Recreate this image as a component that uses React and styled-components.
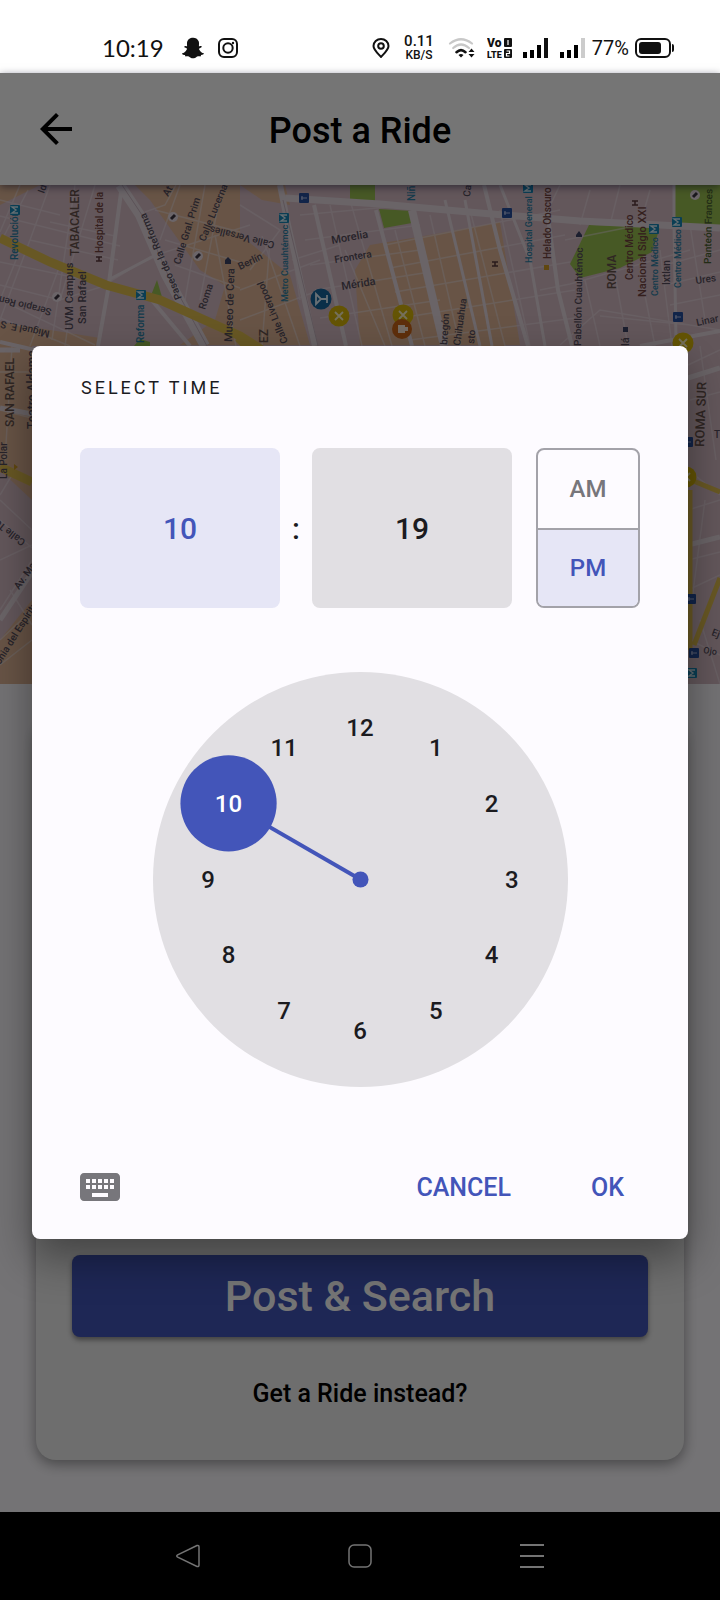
import React, { useState } from "react";
import styled, { createGlobalStyle } from "styled-components";
import { FaSnapchatGhost } from "react-icons/fa";
import { MdArrowBack, MdKeyboard } from "react-icons/md";

const primary = "#4355b9";
const primarySoft = "#e6e6f6";
const neutral = "#e1dfe3";
const surface = "#fdfbff";

const GlobalStyle = createGlobalStyle`
  *, *::before, *::after { box-sizing: border-box; }
  body { margin: 0; font-family: Roboto, "Liberation Sans", sans-serif; color: #1b1b1f; background: #000; }
  button { font: inherit; color: inherit; border: 0; padding: 0; background: none; cursor: pointer; }
  h1, h2 { margin: 0; }
`;

const Phone = styled.div`
  min-height: 100vh;
  display: flex;
  flex-direction: column;
`;

/* status bar */

const StatusBar = styled.div`
  height: 73px;
  padding: 22px 45px 0 102px;
  display: flex;
  align-items: center;
  justify-content: space-between;
  background: #fff;
  color: #111;
`;

const StatusGroup = styled.div`
  display: flex;
  align-items: center;
  gap: ${(p) => p.$gap}px;
  svg { display: block; }
`;

const Clock = styled.span`
  font: 400 24px/28px Lato, sans-serif;
`;

const Speed = styled.span`
  display: grid;
  justify-items: center;
  font-weight: 500;
  font-size: 12px;
  line-height: 12px;
`;

const SpeedValue = styled.span`
  font-size: 15px;
  line-height: 15px;
`;

const Battery = styled.span`
  font-size: 20px;
  line-height: 24px;
`;

/* page under the dialog */

const Screen = styled.main`
  position: relative;
  flex: 1;
  display: flex;
  flex-direction: column;
  background: ${surface};
`;

const Header = styled.header`
  position: relative;
  height: 112px;
  padding: 0 32px;
  display: grid;
  grid-template-columns: 48px 1fr 48px;
  align-items: center;
  background: #fff;
  box-shadow: 0 2px 8px rgba(0, 0, 40, 0.5);
  color: #000;
`;

const IconButton = styled.button`
  width: 48px;
  height: 48px;
  display: grid;
  place-items: center;
  color: ${(p) => p.$color || "inherit"};
`;

const PageTitle = styled.h1`
  padding-top: 4px;
  text-align: center;
  font-size: 36px;
  font-weight: 500;
  line-height: 48px;
`;

const MapDrawing = styled.svg`
  display: block;
  width: 100%;
  height: auto;
  font-family: Roboto, sans-serif;
  font-weight: 500;
`;

const Card = styled.section`
  flex: 1;
  margin: 36px 36px 52px;
  padding: 36px 36px 48px;
  display: flex;
  flex-direction: column;
  justify-content: flex-end;
  align-items: stretch;
  gap: 39px;
  border-radius: 20px;
  background: #efefef;
  box-shadow: 0 4px 14px rgba(0, 0, 0, 0.4);
`;

const SubmitButton = styled.button`
  height: 82px;
  border-radius: 8px;
  background: ${primary};
  box-shadow: 0 3px 5px rgba(0, 0, 0, 0.4);
  color: #fff;
  font-size: 43px;
  font-weight: 500;
`;

const SwitchLink = styled.a`
  align-self: center;
  color: #000;
  font-size: 25px;
  font-weight: 500;
  line-height: 36px;
  text-decoration: none;
`;

/* dialog */

const Scrim = styled.div`
  position: absolute;
  inset: 0;
  padding: 0 32px;
  display: flex;
  flex-direction: column;
  justify-content: center;
  background: rgba(0, 0, 0, 0.54);
`;

const Dialog = styled.div`
  padding: 30px 48px 28px;
  border-radius: 8px;
  background: ${surface};
  box-shadow: 0 18px 44px rgba(0, 0, 0, 0.4);
`;

const DialogTitle = styled.h2`
  padding-left: 1px;
  font-size: 18px;
  font-weight: 400;
  line-height: 24px;
  letter-spacing: 3px;
`;

const TimeRow = styled.div`
  margin-top: 48px;
  height: 160px;
  display: grid;
  grid-template-columns: 1fr 32px 1fr 128px;
`;

const TimeBox = styled.button`
  border-radius: 8px;
  background: ${(p) => (p.$active ? primarySoft : neutral)};
  color: ${(p) => (p.$active ? primary : "#1b1b1f")};
  font-size: 30px;
  font-weight: 500;
`;

const Colon = styled.span`
  align-self: center;
  text-align: center;
  font-size: 30px;
  font-weight: 500;
`;

const Periods = styled.div`
  margin-left: 24px;
  display: grid;
  grid-template-rows: 1fr 1fr;
  border: 2px solid #a3a2a9;
  border-radius: 8px;
  overflow: hidden;
`;

const Period = styled.button`
  background: ${(p) => (p.$active ? primarySoft : "transparent")};
  color: ${(p) => (p.$active ? primary : "#77767b")};
  font-size: 24px;
  font-weight: 500;
  & + & { border-top: 2px solid #a3a2a9; }
`;

const Dial = styled.div`
  position: relative;
  width: 415px;
  max-width: 100%;
  aspect-ratio: 1;
  margin: 64px auto 0;
  border-radius: 50%;
  background: ${neutral};
`;

const Hand = styled.svg`
  display: block;
  width: 100%;
  height: 100%;
`;

const Hour = styled.button`
  position: absolute;
  width: 96px;
  height: 96px;
  transform: translate(-50%, -50%);
  border-radius: 50%;
  color: ${(p) => (p.$active ? "#fff" : "#1b1b1f")};
  font-size: 24px;
  font-weight: 500;
  pointer-events: none;
`;

const Actions = styled.div`
  margin-top: 76px;
  display: flex;
  align-items: center;
  justify-content: space-between;
`;

const ActionGroup = styled.div`
  display: flex;
  gap: 48px;
`;

const TextButton = styled.button`
  height: 48px;
  padding: 0 16px;
  color: ${primary};
  font-size: 25px;
  font-weight: 500;
`;

const KeyboardSlot = styled.div`
  margin-left: -4px;
`;

/* system navigation */

const NavBar = styled.nav`
  height: 88px;
  display: flex;
  align-items: center;
  justify-content: center;
  gap: 124px;
  background: #000;
  color: #747474;
`;

/* map data */

const blocks = [
  "M135 185H240V215L232 290L200 270L150 200Z",
  "M160 200L240 210V290L210 275Z",
  "M0 205L40 185H0Z",
  "M0 322L100 338V346H0Z",
  "M0 470L32 500V400H0Z",
  "M240 235L290 275L310 345H180L215 320Z",
  "M240 185H285L290 205L262 200Z",
  "M370 245L430 235L500 222L520 345H360L355 270Z",
  "M480 280L500 345H470Z",
  "M480 255L505 346H480Z",
  "M0 640L32 600V684H0Z",
  "M0 346H32V440L0 450Z",
];

const parks = [
  "M350 185H375V201H350Z",
  "M379 209L412 211V223L384 228Z",
  "M589 225L660 227L652 252L620 268L580 278L570 264Z",
  "M675 185H720V226L675 224Z",
  "M157 280L162 297L150 298Z",
  "M134 346L140 339L150 342V346Z",
];

const lightRoads = [
  "M0 232L20 185", "M4 236L28 190", "M0 262L106 284L150 257L250 225",
  "M0 285L60 300L110 284", "M50 185L30 240L0 320", "M75 185L52 340", "M95 185L60 300",
  "M0 216L120 246M0 200L60 215", "M30 240L118 260", "M20 250L0 300M60 265L30 346",
  "M0 300L95 345M0 318L70 346", "M75 275L65 346", "M50 222L115 236",
  "M145 212L165 205L176 185", "M180 185L160 240M205 185L185 300M222 185L200 300",
  "M155 210L240 232M165 240L240 262M175 265L240 288", "M215 235L236 346",
  "M240 205L280 230L250 270", "M240 290L320 260M240 320L320 290", "M262 236L300 346",
  "M300 215L410 205M305 240L420 225M310 265L420 250M315 290L430 272M320 318L440 300",
  "M330 205L362 346M350 200L392 346M292 260L340 245", "M285 205L300 300",
  "M385 245L560 210M390 268L565 235M395 292L570 262M400 318L575 290M410 340L575 318",
  "M395 230L425 346M430 215L460 346M470 210L505 346M500 210L530 346",
  "M560 185L548 210M590 190L580 225M620 185L610 225M650 190L640 225",
  "M565 240L640 225M540 290L570 284L690 250", "M585 280L600 346M615 275L628 346M660 250L672 346",
  "M560 345L600 310L720 330M600 316L690 325", "M665 265L720 250M665 285L720 272M670 305L720 295",
  "M640 270L655 346M690 225L705 320", "M345 250L385 346M270 240L262 346",
  "M0 372H32M0 410L32 418M12 346L5 460M0 500L32 530M0 520L32 548M15 470L0 495M0 560L32 545M32 560L0 610M0 640L32 610M0 665L32 640M10 590L32 625",
  "M688 365L720 350M690 400L720 392M700 346L716 460M688 470L720 495M688 510L720 500M688 560L720 552M688 590L720 575M705 500L692 600M690 640L720 655M700 620L720 684",
];

const whiteRoads = [
  { d: "M122 185L108 290L98 346", w: 4 },
  { d: "M120 185L140 215L166 275L205 346", w: 10 },
  { d: "M110 279L158 254", w: 3 },
  { d: "M150 298L190 346", w: 4 },
  { d: "M280 185L287 220L315 346", w: 6 },
  { d: "M285 198L380 204L480 213L580 221L720 228", w: 7 },
  { d: "M314 205L346 346", w: 4 },
  { d: "M376 210L412 346", w: 4 },
  { d: "M412 210L444 346", w: 8 },
  { d: "M445 200L480 346", w: 3 },
  { d: "M465 200L492 346", w: 3 },
  { d: "M484 185L500 250L528 346", w: 4 },
  { d: "M500 185L530 260L545 346", w: 3 },
  { d: "M547 210L558 290L572 346", w: 4 },
  { d: "M674 185V225L676 340", w: 3 },
  { d: "M640 346L720 331", w: 4 },
  { d: "M0 342L35 350", w: 4 },
  { d: "M0 408L32 414M0 620L32 572M688 545L720 537M0 350H20M688 378L720 368", w: 5 },
];

const yellowRoads = [
  { d: "M0 238L50 262L106 285L160 300L240 336L262 350", w: 9 },
  { d: "M0 467L32 482", w: 9 },
  { d: "M238 338L248 348", w: 8 },
  { d: "M691 480L720 492M690 490V650M694 645L720 578", w: 5 },
];

const ink = "#554d5c";
const brown = "#72443f";
const metro = "#2b80a5";
const area = "#68534d";

const labels = [
  { t: "Revolución", x: 18, y: 260, r: -90, c: metro, s: 10 },
  { t: "TABACALER", x: 79, y: 256, r: -90, s: 12, c: area },
  { t: "Hospital de la", x: 103, y: 253, r: -90, c: brown, s: 10 },
  { t: "UVM Campus", x: 73, y: 330, r: -90, s: 11 },
  { t: "San Rafael", x: 86, y: 324, r: -90, s: 11 },
  { t: "Serapio Ren", x: 52, y: 309, r: 194, s: 10 },
  { t: "Miguel E. S", x: 50, y: 331, r: 192, s: 10 },
  { t: "Id", x: 44, y: 194, r: -70, s: 10 },
  { t: "Paseo de la Reforma", x: 182, y: 298, r: 247, s: 10 },
  { t: "Calle Gral. Prim", x: 180, y: 265, r: -73, s: 10 },
  { t: "Calle Lucerna", x: 205, y: 242, r: -68, s: 10 },
  { t: "At", x: 168, y: 197, r: -60, s: 10 },
  { t: "Roma", x: 205, y: 310, r: -72, s: 10 },
  { t: "Museo de Cera", x: 232, y: 342, r: -88, s: 11 },
  { t: "Reforma", x: 144, y: 343, r: -90, c: metro, s: 10 },
  { t: "Metro Cuauhtémoc", x: 288, y: 302, r: -90, c: metro, s: 9 },
  { t: "Calle Versalles", x: 275, y: 242, r: 194, s: 10 },
  { t: "Berlín", x: 240, y: 270, r: -26, s: 10 },
  { t: "Calle Liverpool", x: 288, y: 342, r: 248, s: 10 },
  { t: "EZ", x: 268, y: 343, r: -90, s: 12, c: area },
  { t: "Morelia", x: 332, y: 244, r: -10, s: 11 },
  { t: "Frontera", x: 335, y: 263, r: -9, s: 10 },
  { t: "Mérida", x: 342, y: 290, r: -9, s: 11 },
  { t: "Niñ", x: 415, y: 201, r: -90, c: metro, s: 10 },
  { t: "bregón", x: 447, y: 345, r: -86, s: 10 },
  { t: "Chihuahua", x: 460, y: 346, r: -82, s: 10 },
  { t: "sto", x: 474, y: 344, r: -84, s: 10 },
  { t: "Ca", x: 470, y: 197, r: -84, s: 10 },
  { t: "Hospital General", x: 532, y: 263, r: -90, c: metro, s: 9 },
  { t: "Helado Obscuro", x: 551, y: 259, r: -90, c: brown, s: 10 },
  { t: "Pabellón Cuauhtémoc", x: 581, y: 346, r: -89, s: 10 },
  { t: "ROMA", x: 616, y: 289, r: -90, s: 12, c: area },
  { t: "Centro Médico", x: 633, y: 280, r: -90, c: brown, s: 10 },
  { t: "Nacional Siglo XXI", x: 646, y: 297, r: -90, c: brown, s: 11 },
  { t: "Centro Médico", x: 658, y: 296, r: -90, c: metro, s: 9 },
  { t: "Ixtlan", x: 670, y: 285, r: -90, s: 10 },
  { t: "Centro Médico", x: 681, y: 288, r: -90, c: metro, s: 9 },
  { t: "Panteón Frances", x: 711, y: 264, r: -89, s: 10, c: "#49602f" },
  { t: "Ures", x: 696, y: 284, r: -8, s: 10 },
  { t: "Linar", x: 697, y: 326, r: -12, s: 10 },
  { t: "lá", x: 629, y: 346, r: -90, s: 11 },
  { t: "SAN RAFAEL", x: 14, y: 427, r: -90, s: 12, c: area },
  { t: "Teatro Aldama", x: 36, y: 429, r: -90, s: 12 },
  { t: "La Polar", x: 7, y: 479, r: -90, s: 10 },
  { t: "Calle To", x: 26, y: 541, r: 218, s: 10 },
  { t: "Av. Mar", x: 19, y: 590, r: -55, s: 10 },
  { t: "onia del Espíritu", x: 0, y: 665, r: -58, s: 10 },
  { t: "ROMA SUR", x: 704, y: 447, r: -88, s: 13, c: area },
  { t: "T", x: 714, y: 438, r: 0, s: 10 },
  { t: "Ej", x: 711, y: 635, r: 20, s: 10 },
  { t: "Ojo", x: 703, y: 653, r: 8, s: 9 },
];

const metroSigns = [[15, 210], [141, 295], [284, 218], [528, 188], [654, 229], [677, 222], [692, 673]];
const lineSigns = [[304, 198], [507, 213], [678, 317], [688, 442], [691, 599], [694, 653]];
const foodPins = [[339, 316], [403, 315], [683, 343], [686, 477]];
const minorPins = [[173, 217], [198, 256], [57, 297], [695, 195]];

function CityMap() {
  return (
    <MapDrawing viewBox="0 185 720 499" role="img" aria-label="Map">
      <rect y="185" width="720" height="499" fill="#d8bdc6" />
      <g fill="#e2b898">
        {blocks.map((d) => <path key={d} d={d} />)}
      </g>
      <g fill="#9cc252">
        {parks.map((d) => <path key={d} d={d} />)}
      </g>
      <g fill="none" stroke="#eee3e9" strokeWidth="1.5" opacity=".5">
        {lightRoads.map((d) => <path key={d} d={d} />)}
      </g>
      <g fill="none" stroke="#e6dae1">
        {whiteRoads.map((r) => <path key={r.d} d={r.d} strokeWidth={r.w} />)}
      </g>
      <path d="M122 185L142 215L168 275L207 346M283 200L318 346" fill="none" stroke="#c8b4bf" strokeWidth="1" />
      <g fill="none" stroke="#e3c050">
        {yellowRoads.map((r) => <path key={r.d} d={r.d} strokeWidth={r.w} />)}
      </g>
      {labels.map((l, i) => (
        <text key={i} fontSize={l.s} fill={l.c || ink} transform={`translate(${l.x} ${l.y}) rotate(${l.r})`}>
          {l.t}
        </text>
      ))}
      {metroSigns.map(([x, y]) => (
        <g key={`${x}-${y}`} transform={`translate(${x} ${y}) rotate(-90)`}>
          <rect x="-5" y="-5" width="10" height="10" rx="1" fill="#1787b8" />
          <path d="M-3 3V-3L0 1L3 -3V3" fill="none" stroke="#d9eef7" strokeWidth="1.4" />
        </g>
      ))}
      {lineSigns.map(([x, y]) => (
        <g key={`${x}-${y}`} transform={`translate(${x} ${y})`}>
          <rect x="-5" y="-5" width="10" height="10" rx="1" fill="#274f9f" />
          <path d="M-3 0H3M-2 -2V2" stroke="#b5c2ea" strokeWidth="1.2" />
        </g>
      ))}
      {minorPins.map(([x, y]) => (
        <g key={`${x}-${y}`}>
          <circle cx={x} cy={y} r="5" fill="#eadde4" />
          <path d={`M${x - 2} ${y + 2}L${x + 2} ${y - 2}`} stroke="#3b3440" strokeWidth="3" />
        </g>
      ))}
      <path d="M96 257H102M96 261H102M99 257V261M492 262H498M492 266H498M495 262V266M632 201H638M632 205H638M635 201V205" stroke="#5b3a3e" strokeWidth="1.500" fill="none" />
      <path d="M225 264V260L228 257L231 260V264ZM576 235L579 231L582 235V237H576ZM623 327H628V332H623Z" fill="#3e4468" />
      <path d="M544 265H549V270H544ZM14 464L18 467L14 470Z" fill="#d19b24" />
      {foodPins.map(([x, y]) => (
        <g key={`${x}-${y}`} transform={`translate(${x} ${y})`}>
          <circle r="10.5" fill="#d9b80a" />
          <path d="M-4 -4L4 4M-4 4L4 -4" stroke="#fff5c8" strokeWidth="1.8" />
        </g>
      ))}
      <circle cx="402" cy="329" r="10" fill="#cf661a" />
      <path d="M398 325H405V333H398ZM405 327H408V331H405" fill="#ffe9d6" />
      <circle cx="321" cy="299" r="10.5" fill="#17679f" />
      <path d="M316 294V304L321 299ZM321 299H327M327 295V303" fill="none" stroke="#e5f4ff" strokeWidth="1.8" />
    </MapDrawing>
  );
}

function SignalBars({ dimLast }) {
  return (
    <svg width="26" height="20" viewBox="0 0 26 20" aria-hidden="true">
      <path d="M0 14h4v6H0zM7 12h4v8H7zM14 7h4v13h-4z" />
      <path d="M21 0h4v20h-4z" fill={dimLast ? "#ccc" : "currentColor"} />
    </svg>
  );
}

function Status() {
  return (
    <StatusBar>
      <StatusGroup $gap={18}>
        <Clock>10:19</Clock>
        <StatusGroup $gap={14}>
          <FaSnapchatGhost size={22} />
          <svg width="20" height="20" viewBox="0 0 20 20" fill="none" stroke="currentColor" strokeWidth="2" aria-hidden="true">
            <rect x="1" y="1" width="18" height="18" rx="5" />
            <circle cx="10" cy="10" r="4.7" />
            <circle cx="15" cy="5" r="1.2" fill="currentColor" stroke="none" />
          </svg>
        </StatusGroup>
      </StatusGroup>
      <StatusGroup $gap={6}>
        <StatusGroup $gap={11}>
          <StatusGroup $gap={14}>
            <svg width="18" height="20" viewBox="0 0 18 20" fill="none" stroke="currentColor" strokeWidth="2" aria-hidden="true">
              <path d="M9 19C7 16.500 1.500 12 1.500 8a7.500 7 0 0 1 15 0C16.500 12 11 16.500 9 19Z" />
              <circle cx="9" cy="8" r="2.800" />
            </svg>
            <Speed>
              <SpeedValue>0.11</SpeedValue>
              <span>KB/S</span>
            </Speed>
            <svg width="28" height="20" viewBox="0 0 28 20" fill="none" strokeWidth="2.200" strokeLinecap="round" aria-hidden="true">
              <path d="M2 5.500Q13 -3 24 5.500" stroke="#c8c8c8" />
              <path d="M5.200 10Q13 3 21 10" stroke="#c8c8c8" />
              <path d="M8.500 14.200Q13 10 17.500 14.200" stroke="currentColor" strokeWidth="2.600" />
              <path d="M13 19.500L10.500 17Q13 15 15.500 17Z" fill="currentColor" />
              <path d="M20.500 14L23.500 10.500L26.500 14ZM20.500 16L23.500 19.500L26.500 16Z" fill="currentColor" />
            </svg>
          </StatusGroup>
          <svg width="25" height="28" viewBox="0 -4 25 28" fill="currentColor" fontFamily="Roboto, sans-serif" fontWeight="900">
            <text x="0" y="9" fontSize="12">Vo</text>
            <text x="0" y="20" fontSize="9">LTE</text>
            <rect x="17" y="0" width="8" height="9" rx="1" />
            <rect x="17" y="11" width="8" height="9" rx="1" />
            <path d="M21 2v5M19.500 13H22.500V15.500H19.500V18H22.500" fill="none" stroke="#fff" strokeWidth="1.200" />
          </svg>
          <SignalBars />
          <SignalBars dimLast />
        </StatusGroup>
        <Battery>77%</Battery>
        <svg width="40" height="20" viewBox="0 0 40 20" aria-hidden="true">
          <rect x="1" y="1" width="34" height="18" rx="5" fill="none" stroke="currentColor" strokeWidth="2" />
          <rect x="4" y="4" width="22" height="12" rx="3" fill="currentColor" />
          <path d="M37 6q2 0 2 2v4q0 2-2 2z" fill="currentColor" />
        </svg>
      </StatusGroup>
    </StatusBar>
  );
}

function ClockDial({ hour, onChange }) {
  const point = (h, r) => {
    const a = (h * Math.PI) / 6;
    return [Math.sin(a) * r, -Math.cos(a) * r];
  };
  const [hx, hy] = point(hour, 152);
  const pick = (e) => {
    const box = e.currentTarget.getBoundingClientRect();
    const dx = e.clientX - box.left - box.width / 2;
    const dy = e.clientY - box.top - box.height / 2;
    onChange(((Math.round((Math.atan2(dx, -dy) * 6) / Math.PI) + 11 + 12) % 12) + 1);
  };
  return (
    <Dial role="group" aria-label="Hour" onClick={pick}>
      <Hand viewBox="-207 -207 414 414" aria-hidden="true">
        <path d={`M0 0L${hx} ${hy}`} stroke={primary} strokeWidth="4" />
        <circle r="8" fill={primary} />
        <circle cx={hx} cy={hy} r="48" fill={primary} />
      </Hand>
      {[12, 1, 2, 3, 4, 5, 6, 7, 8, 9, 10, 11].map((h) => {
        const [x, y] = point(h, 36.6);
        return (
          <Hour
            key={h}
            type="button"
            $active={h === hour}
            aria-pressed={h === hour}
            onKeyDown={(e) => e.key === "Enter" && onChange(h)}
            style={{ left: `${50 + x}%`, top: `${50 + y}%` }}
          >
            {h}
          </Hour>
        );
      })}
    </Dial>
  );
}

function TimeDialog() {
  const [hour, setHour] = useState(10);
  const [period, setPeriod] = useState("PM");
  return (
    <Scrim>
      <Dialog role="dialog" aria-modal="true" aria-labelledby="time-title">
        <DialogTitle id="time-title">SELECT TIME</DialogTitle>
        <TimeRow>
          <TimeBox type="button" $active aria-label={`Hour ${hour}`}>{hour}</TimeBox>
          <Colon>:</Colon>
          <TimeBox type="button" aria-label="Minute 19">19</TimeBox>
          <Periods role="group" aria-label="Period">
            {["AM", "PM"].map((p) => (
              <Period key={p} type="button" $active={p === period} aria-pressed={p === period} onClick={() => setPeriod(p)}>
                {p}
              </Period>
            ))}
          </Periods>
        </TimeRow>
        <ClockDial hour={hour} onChange={setHour} />
        <Actions>
          <KeyboardSlot>
            <IconButton type="button" $color="#77767b" aria-label="Type the time">
              <MdKeyboard size={48} />
            </IconButton>
          </KeyboardSlot>
          <ActionGroup>
            <TextButton type="button">CANCEL</TextButton>
            <TextButton type="button">OK</TextButton>
          </ActionGroup>
        </Actions>
      </Dialog>
    </Scrim>
  );
}

function SystemNav() {
  const icon = { width: 24, height: 24, viewBox: "0 0 24 24", fill: "none", stroke: "currentColor", strokeWidth: 1.5 };
  return (
    <NavBar aria-label="System">
      <IconButton type="button" aria-label="Back">
        <svg {...icon}>
          <path d="M21 1.500 1.700 10.800Q-.2 12 1.700 13.200L21 22.500Q23 23 23 21V3Q23 1 21 1.500Z" />
        </svg>
      </IconButton>
      <IconButton type="button" aria-label="Home">
        <svg {...icon}>
          <rect x="1" y="1" width="22" height="22" rx="5" />
        </svg>
      </IconButton>
      <IconButton type="button" aria-label="Recent apps">
        <svg {...icon} strokeWidth={2}>
          <path d="M0 1h24M0 12h24M0 23h24" />
        </svg>
      </IconButton>
    </NavBar>
  );
}

export default function App() {
  return (
    <Phone>
      <GlobalStyle />
      <Status />
      <Screen>
        <Header>
          <IconButton type="button" aria-label="Go back">
            <MdArrowBack size={48} />
          </IconButton>
          <PageTitle>Post a Ride</PageTitle>
        </Header>
        <CityMap />
        <Card>
          <SubmitButton type="button">Post &amp; Search</SubmitButton>
          <SwitchLink href="#get-a-ride">Get a Ride instead?</SwitchLink>
        </Card>
        <TimeDialog />
      </Screen>
      <SystemNav />
    </Phone>
  );
}
